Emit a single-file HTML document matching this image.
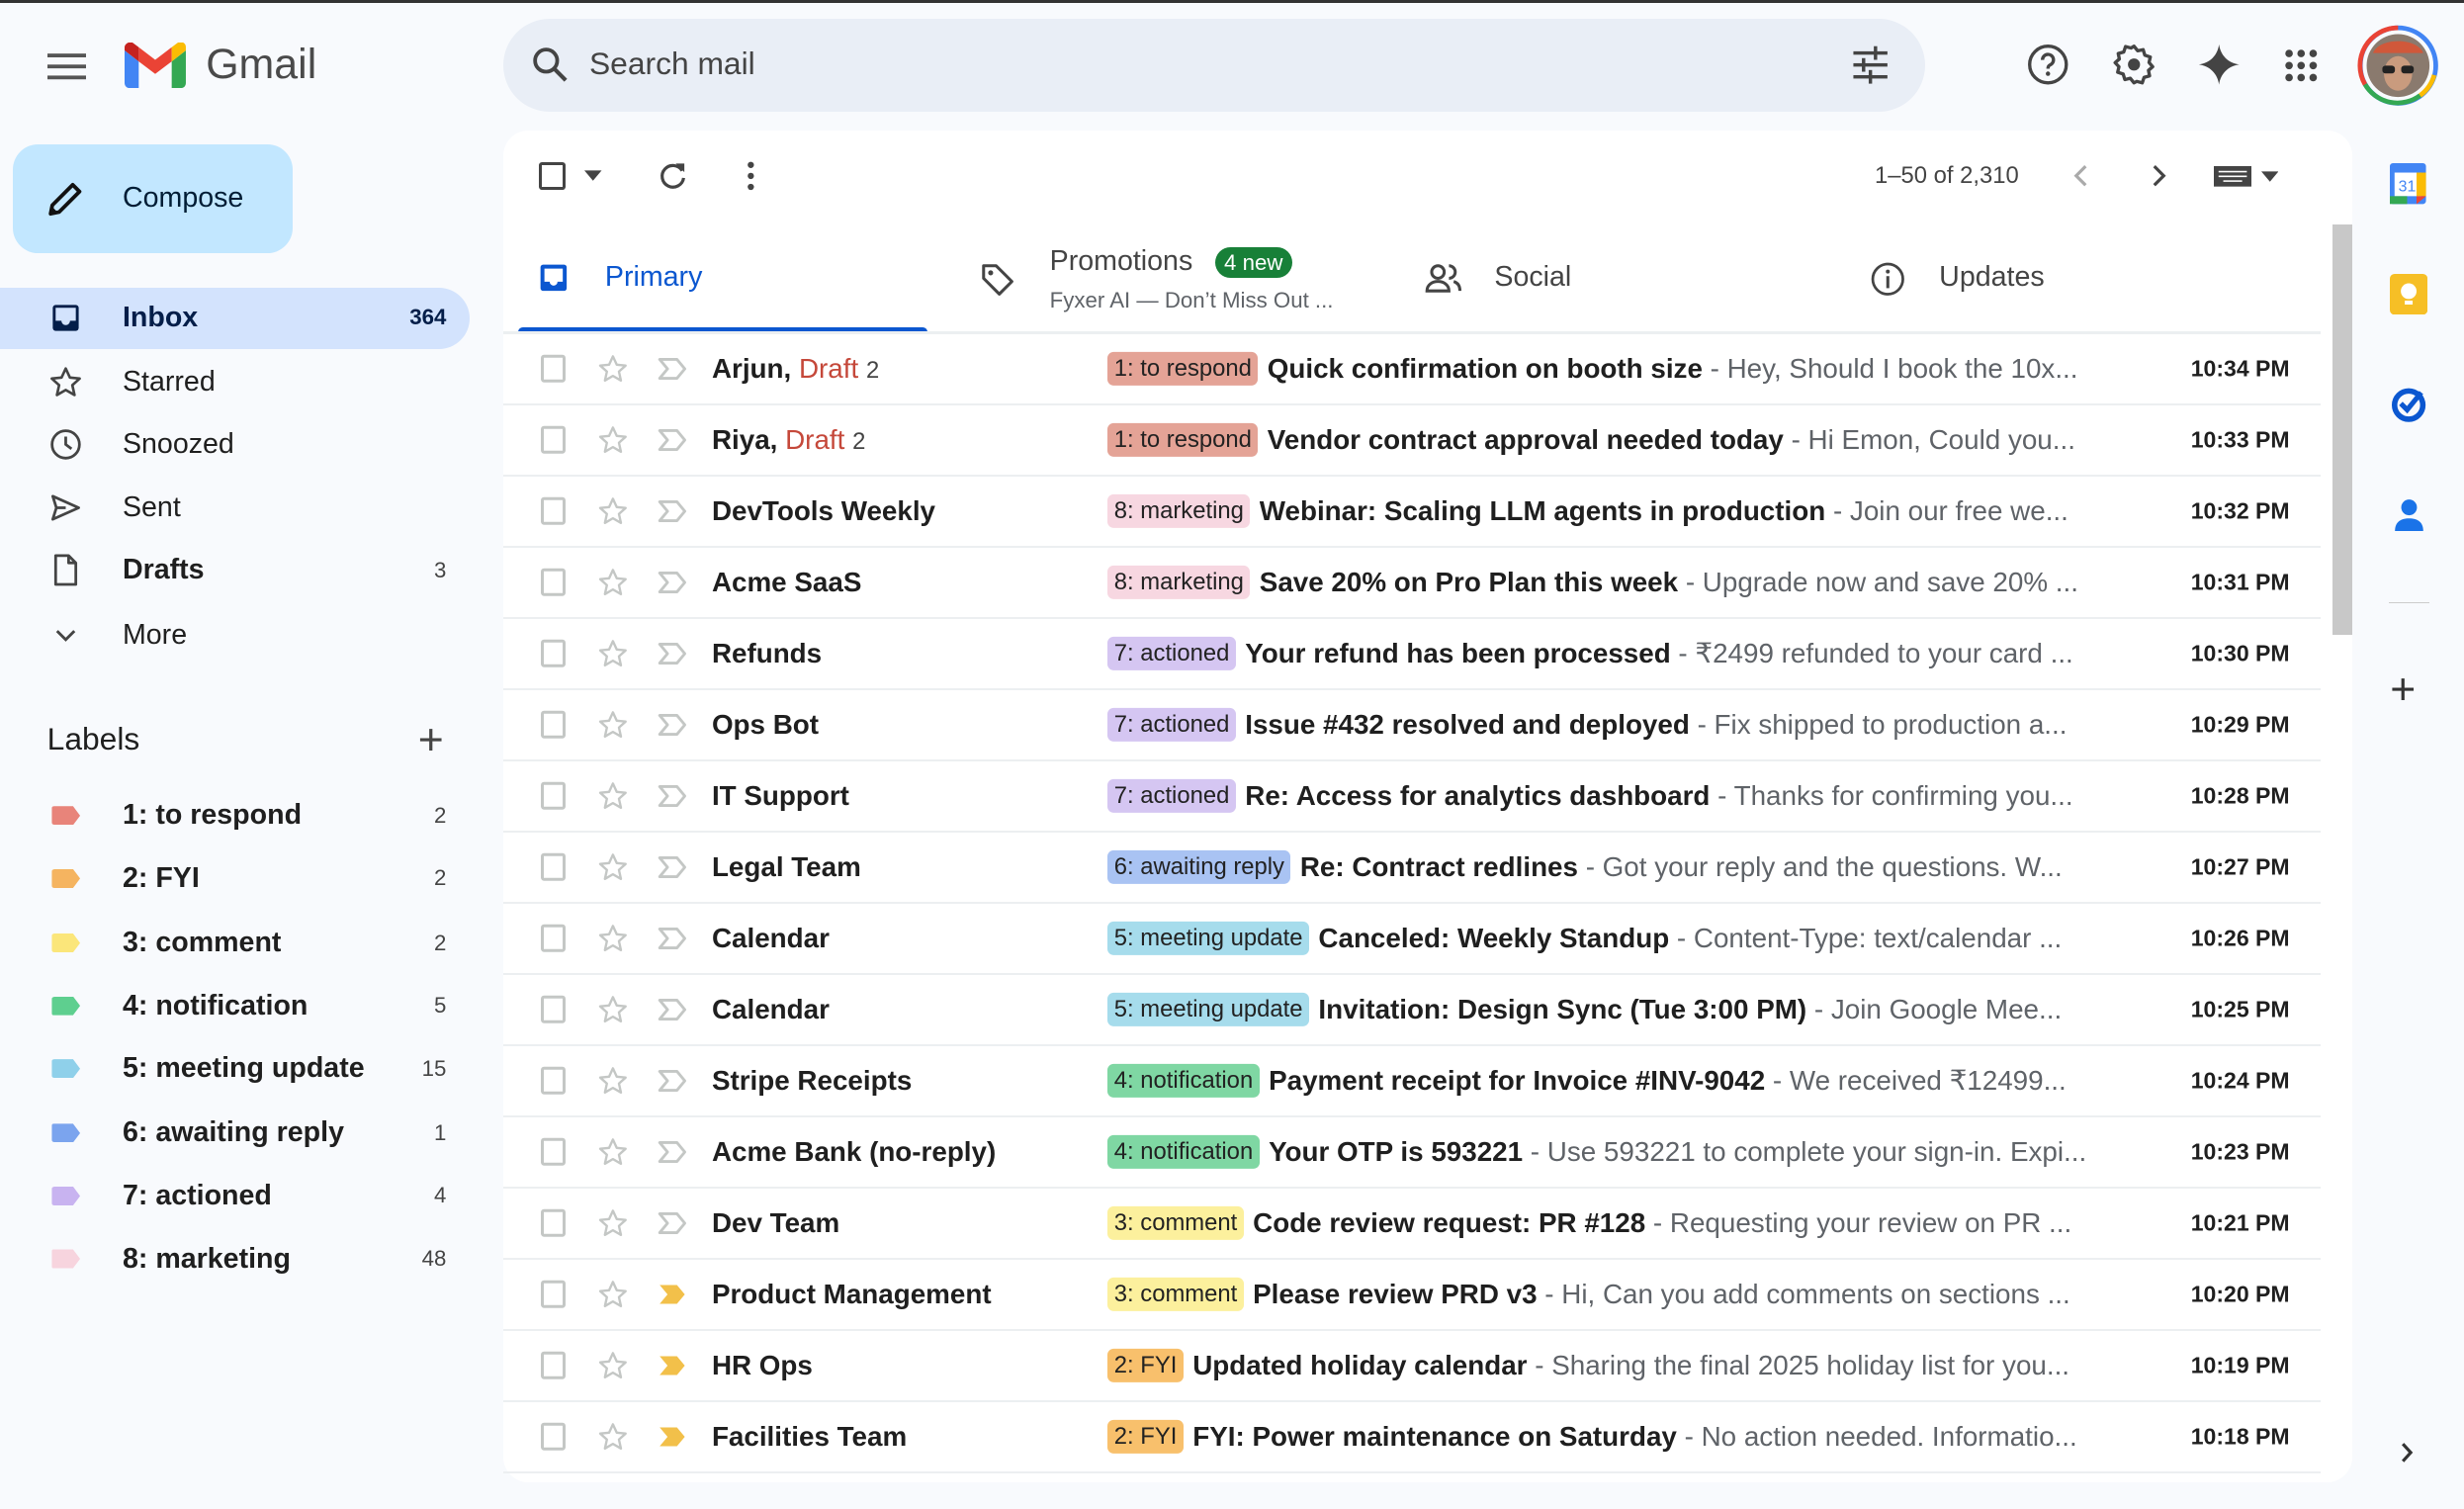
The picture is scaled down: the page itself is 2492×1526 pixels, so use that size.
<!DOCTYPE html>
<html><head><meta charset="utf-8"><style>
*{box-sizing:border-box;margin:0;padding:0}
html,body{width:2492px;height:1526px;overflow:hidden;background:#f8fafd}
#z{zoom:1.589286;width:1568px;height:960px;position:relative;font-family:"Liberation Sans",sans-serif;color:#1f1f1f;background:#f8fafd;overflow:hidden}
.topline{position:absolute;left:0;top:0;width:1568px;height:2px;background:#333}
.abs{position:absolute}
svg{display:block}
.nav{position:absolute;left:0;width:299px;height:40px;display:flex;align-items:center;font-size:18px}
.nav .ic{position:absolute;left:31px;top:9px}
.nav .t{position:absolute;left:78px}
.nav .c{position:absolute;right:15px;font-size:14px;color:#444}
.lab{position:absolute;left:0;width:299px;height:40px;display:flex;align-items:center;font-size:18px;font-weight:bold}
.lab .tg{position:absolute;left:33px;width:18px;height:12px;border-radius:2px 0 0 2px;clip-path:polygon(0 0,75% 0,100% 50%,75% 100%,0 100%)}
.lab .t{position:absolute;left:78px}
.lab .c{position:absolute;right:15px;font-size:14px;color:#444;font-weight:normal}
.main{position:absolute;left:320px;top:83px;width:1177px;height:860px;background:#fff;border-radius:16px}
.row{position:absolute;left:320px;width:1157px;height:45.3px;border-bottom:1.5px solid #eceff1;font-size:17.5px}
.row>*{position:absolute;top:50%;transform:translateY(-50%)}
.cb{left:24px;width:16px;height:18px;border:2px solid #c4c7c5;border-radius:2px}
.snd{left:133px;font-weight:bold;white-space:nowrap}
.snd .d{color:#c5483a;font-weight:normal}
.snd .n{color:#444;font-weight:normal;font-size:15px}
.tag{font-size:15px;padding:2px 4px;border-radius:4px;white-space:nowrap;color:#222}
.msg{white-space:nowrap;overflow:hidden;text-overflow:ellipsis;color:#5f6368}
.msg b{color:#1f1f1f}
.tm{right:20px;font-weight:bold;font-size:14.5px}
</style></head><body><div id="z">
<div class="topline"></div>
<!-- header -->
<svg class="abs" style="left:30px;top:32px" width="25" height="20" viewBox="0 0 25 20"><rect y="2" width="25" height="2.4" fill="#555"/><rect y="9" width="25" height="2.4" fill="#555"/><rect y="16" width="25" height="2.4" fill="#555"/></svg>
<svg class="abs" style="left:79px;top:27px" width="39" height="29" viewBox="0 0 39 29">
<path d="M0 5v21a3 3 0 0 0 3 3h6V12z" fill="#4285f4"/><path d="M30 12v17h6a3 3 0 0 0 3-3V5z" fill="#34a853"/>
<path d="M9 12 19.5 20 30 12V3l-10.5 8L9 3z" fill="#ea4335"/><path d="M0 5l9 7V3L5 0C3 -1 0 1 0 3z" fill="#c5221f"/><path d="M30 3v9l9-7V3c0-3-3-4-5-3z" fill="#fbbc04"/></svg>
<div class="abs" style="left:131px;top:26px;font-size:27px;color:#4a4a4a">Gmail</div>
<div class="abs" style="left:320px;top:12px;width:905px;height:59px;border-radius:30px;background:#e9eef6"></div>
<svg class="abs" style="left:337px;top:28px" width="26" height="26" viewBox="0 0 24 24"><circle cx="9.5" cy="9.5" r="6.5" fill="none" stroke="#444" stroke-width="2.2"/><path d="M14.5 14.5 21 21" stroke="#444" stroke-width="2.4"/></svg>
<div class="abs" style="left:375px;top:29px;font-size:20px;color:#444">Search mail</div>
<svg class="abs" style="left:1177px;top:28px" width="26" height="26" viewBox="0 0 24 24" fill="#444"><rect x="2" y="4" width="20" height="2"/><rect x="14" y="1" width="2" height="8"/><rect x="2" y="11" width="20" height="2"/><rect x="7" y="8" width="2" height="8"/><rect x="2" y="18" width="20" height="2"/><rect x="11" y="15" width="2" height="8"/></svg>
<svg class="abs" style="left:1289px;top:27px" width="28" height="28" viewBox="0 0 24 24"><circle cx="12" cy="12" r="10" fill="none" stroke="#444" stroke-width="1.8"/><path d="M9 9.5a3 3 0 1 1 4 2.8c-.8.4-1 1-1 2" fill="none" stroke="#444" stroke-width="1.8"/><circle cx="12" cy="17" r="1.2" fill="#444"/></svg>
<svg class="abs" style="left:1344px;top:27px" width="28" height="28" viewBox="0 0 24 24"><path d="M12 2l2 2.5 3-.6.9 3 3 1-.7 3 2 2.3-2.3 2 .6 3-3 .8-1 3-3-.8L12 22l-2-2.5-3 .7-.9-3-3-1 .7-3L1.7 11 4 9l-.6-3 3-.8 1-3 3 .8z" fill="none" stroke="#444" stroke-width="1.8" stroke-linejoin="round"/><circle cx="12" cy="12" r="3.3" fill="#444"/></svg>
<svg class="abs" style="left:1398px;top:27px" width="28" height="28" viewBox="0 0 24 24"><path d="M12 1C12.8 7 17 11.2 23 12 17 12.8 12.8 17 12 23 11.2 17 7 12.8 1 12 7 11.2 11.2 7 12 1z" fill="#444"/></svg>
<svg class="abs" style="left:1453px;top:30px" width="23" height="23" viewBox="0 0 24 24" fill="#444"><circle cx="4" cy="4" r="2.5"/><circle cx="12" cy="4" r="2.5"/><circle cx="20" cy="4" r="2.5"/><circle cx="4" cy="12" r="2.5"/><circle cx="12" cy="12" r="2.5"/><circle cx="20" cy="12" r="2.5"/><circle cx="4" cy="20" r="2.5"/><circle cx="12" cy="20" r="2.5"/><circle cx="20" cy="20" r="2.5"/></svg>
<svg class="abs" style="left:1500px;top:16px" width="52" height="52" viewBox="0 0 52 52"><circle cx="26" cy="26" r="24" fill="none" stroke="#4285f4" stroke-width="3"/><path d="M26 2A24 24 0 0 0 5 38" fill="none" stroke="#ea4335" stroke-width="3"/><path d="M5 38A24 24 0 0 0 40 45" fill="none" stroke="#34a853" stroke-width="3"/><path d="M40 45A24 24 0 0 0 49 32" fill="none" stroke="#fbbc04" stroke-width="3"/><circle cx="26" cy="26" r="20" fill="#8a7a6e"/><path d="M10 18c4-10 28-10 32 0z" fill="#d0583a"/><ellipse cx="26" cy="31" rx="9" ry="11" fill="#c99b7e"/><rect x="16" y="26" width="8" height="5" rx="2" fill="#222"/><rect x="28" y="26" width="8" height="5" rx="2" fill="#222"/></svg>
<!-- sidebar -->
<div class="abs" style="left:8px;top:92px;width:178px;height:69px;border-radius:16px;background:#c2e7ff"></div>
<svg class="abs" style="left:29px;top:113px" width="26" height="26" viewBox="0 0 24 24"><path d="M3 21l1-5L16 4l4 4L8 20z" fill="none" stroke="#111" stroke-width="2.2" stroke-linejoin="round"/><path d="M3 21l1-4 3 3z" fill="#111"/></svg>
<div class="abs" style="left:78px;top:116px;font-size:18px;color:#001d35">Compose</div>
<div class="abs" style="left:0;top:183px;width:299px;height:39px;background:#d3e3fd;border-radius:0 20px 20px 0"></div>
<div class="nav" style="top:182px;font-weight:bold;color:#041e49"><svg class="ic" width="22" height="22" viewBox="0 0 24 24"><rect x="3" y="3" width="18" height="18" rx="2" fill="#041e49"/><path d="M5 5h14v9h-4a3 3 0 0 1-6 0H5z" fill="#d3e3fd"/></svg><span class="t">Inbox</span><span class="c" style="color:#041e49;font-weight:bold">364</span></div>
<div class="nav" style="top:223px"><svg class="ic" width="22" height="22" viewBox="0 0 24 24"><path d="M12 2.5l2.9 6.3 6.8.7-5.1 4.6 1.5 6.8L12 17.4 5.9 20.9l1.5-6.8L2.3 9.5l6.8-.7z" fill="none" stroke="#444" stroke-width="1.8" stroke-linejoin="round"/></svg><span class="t">Starred</span></div>
<div class="nav" style="top:263px"><svg class="ic" width="22" height="22" viewBox="0 0 24 24"><circle cx="12" cy="12" r="9.5" fill="none" stroke="#444" stroke-width="1.9"/><path d="M12 6.5V12l4 3" fill="none" stroke="#444" stroke-width="1.9"/></svg><span class="t">Snoozed</span></div>
<div class="nav" style="top:303px"><svg class="ic" width="22" height="22" viewBox="0 0 24 24"><path d="M3 4l18 8-18 8 2.5-8z M5.5 12H12" fill="none" stroke="#444" stroke-width="1.9" stroke-linejoin="round"/></svg><span class="t">Sent</span></div>
<div class="nav" style="top:343px;font-weight:bold"><svg class="ic" width="22" height="22" viewBox="0 0 24 24"><path d="M5 2h9l5 5v15H5z M14 2v5h5" fill="none" stroke="#444" stroke-width="1.9" stroke-linejoin="round"/></svg><span class="t">Drafts</span><span class="c" style="font-weight:normal">3</span></div>
<div class="nav" style="top:384px"><svg class="ic" width="22" height="22" viewBox="0 0 24 24"><path d="M6 9l6 6 6-6" fill="none" stroke="#444" stroke-width="2"/></svg><span class="t">More</span></div>
<div class="abs" style="left:30px;top:459px;font-size:20px;color:#1f1f1f">Labels</div>
<div class="abs" style="left:266px;top:456px;font-size:28px;color:#444;line-height:30px">+</div>
<div class="lab" style="top:499px"><span class="tg" style="background:#e8847a"></span><span class="t">1: to respond</span><span class="c">2</span></div>
<div class="lab" style="top:539px"><span class="tg" style="background:#f5b460"></span><span class="t">2: FYI</span><span class="c">2</span></div>
<div class="lab" style="top:580px"><span class="tg" style="background:#fbe67a"></span><span class="t">3: comment</span><span class="c">2</span></div>
<div class="lab" style="top:620px"><span class="tg" style="background:#5ecf8f"></span><span class="t">4: notification</span><span class="c">5</span></div>
<div class="lab" style="top:660px"><span class="tg" style="background:#8fd0ea"></span><span class="t">5: meeting update</span><span class="c">15</span></div>
<div class="lab" style="top:701px"><span class="tg" style="background:#7ba4ee"></span><span class="t">6: awaiting reply</span><span class="c">1</span></div>
<div class="lab" style="top:741px"><span class="tg" style="background:#c8b3f0"></span><span class="t">7: actioned</span><span class="c">4</span></div>
<div class="lab" style="top:781px"><span class="tg" style="background:#f7d4de"></span><span class="t">8: marketing</span><span class="c">48</span></div>
<!-- main -->
<div class="main"></div>
<div class="abs" style="left:343px;top:103px;width:17px;height:18px;border:2px solid #444;border-radius:2px"></div>
<svg class="abs" style="left:372px;top:108px" width="11" height="7" viewBox="0 0 10 6"><path d="M0 0h10L5 6z" fill="#444"/></svg>
<svg class="abs" style="left:417px;top:101px" width="22" height="22" viewBox="0 0 24 24"><path d="M18.5 8A7.5 7.5 0 1 0 19.5 13" fill="none" stroke="#444" stroke-width="2.2"/><path d="M14 3h6v6z" fill="#444"/></svg>
<svg class="abs" style="left:474px;top:102px" width="8" height="20" viewBox="0 0 8 20" fill="#444"><circle cx="4" cy="3" r="2"/><circle cx="4" cy="10" r="2"/><circle cx="4" cy="17" r="2"/></svg>
<div class="abs" style="left:1193px;top:103px;font-size:15px;color:#444">1–50 of 2,310</div>
<svg class="abs" style="left:1318px;top:104px" width="12" height="16" viewBox="0 0 12 16"><path d="M9 2 3 8l6 6" fill="none" stroke="#aaa" stroke-width="2"/></svg>
<svg class="abs" style="left:1368px;top:104px" width="12" height="16" viewBox="0 0 12 16"><path d="M3 2l6 6-6 6" fill="none" stroke="#444" stroke-width="2"/></svg>
<svg class="abs" style="left:1409px;top:106px" width="24" height="13" viewBox="0 0 24 13"><rect width="24" height="13" fill="#444"/><g fill="#fff"><rect x="3" y="3" width="18" height="1"/><rect x="3" y="6" width="18" height="1"/><rect x="6" y="9" width="12" height="1"/></g></svg>
<svg class="abs" style="left:1439px;top:109px" width="11" height="7" viewBox="0 0 10 6"><path d="M0 0h10L5 6z" fill="#444"/></svg>
<!-- tabs -->
<svg class="abs" style="left:342px;top:167px" width="20" height="20" viewBox="0 0 24 24"><rect x="2" y="2" width="20" height="20" rx="2" fill="#0b57d0"/><path d="M5 5h14v10h-4a3 3 0 0 1-6 0H5z" fill="#fff"/></svg>
<div class="abs" style="left:385px;top:166px;font-size:18px;color:#0b57d0">Primary</div>
<div class="abs" style="left:330px;top:208px;width:260px;height:4px;background:#0b57d0;border-radius:3px 3px 0 0"></div>
<div class="abs" style="left:320px;top:211px;width:1157px;height:1.5px;background:#eceff1"></div>
<svg class="abs" style="left:623px;top:166px" width="24" height="24" viewBox="0 0 24 24"><path d="M3 3h8l10 10-8 8L3 11z" fill="none" stroke="#444" stroke-width="1.9" stroke-linejoin="round"/><circle cx="7.5" cy="7.5" r="1.6" fill="#444"/></svg>
<div class="abs" style="left:668px;top:156px;font-size:18px;color:#444">Promotions</div>
<div class="abs" style="left:773px;top:157px;height:20px;padding:0 6px;border-radius:10px;background:#188038;color:#fff;font-size:14px;line-height:20px">4 new</div>
<div class="abs" style="left:668px;top:183px;font-size:14px;color:#5f6368">Fyxer AI — Don’t Miss Out ...</div>
<svg class="abs" style="left:906px;top:166px" width="26" height="22" viewBox="0 0 26 22"><circle cx="9" cy="7" r="4" fill="none" stroke="#444" stroke-width="1.9"/><path d="M2 19c0-4 3.5-6 7-6s7 2 7 6z" fill="none" stroke="#444" stroke-width="1.9"/><path d="M16 3a4 4 0 0 1 0 8M19 13c2.5.7 4 2.5 4 6" fill="none" stroke="#444" stroke-width="1.9"/></svg>
<div class="abs" style="left:951px;top:166px;font-size:18px;color:#444">Social</div>
<svg class="abs" style="left:1190px;top:166px" width="23" height="23" viewBox="0 0 24 24"><circle cx="12" cy="12" r="10" fill="none" stroke="#444" stroke-width="1.8"/><rect x="11" y="10" width="2" height="8" fill="#444"/><circle cx="12" cy="7" r="1.3" fill="#444"/></svg>
<div class="abs" style="left:1234px;top:166px;font-size:18px;color:#444">Updates</div>
<div class="abs" style="left:1484px;top:143px;width:13px;height:261px;background:#c8c8c8"></div>
<div id="rows"></div>
<!-- right panel -->
<svg class="abs" style="left:1521px;top:104px" width="23" height="26" viewBox="0 0 23 26"><rect width="23" height="26" rx="2" fill="#4285f4"/><rect x="3" y="6" width="17" height="15" fill="#fff"/><rect x="0" y="21" width="11" height="5" fill="#34a853"/><rect x="17" y="6" width="6" height="15" fill="#fbbc04"/><path d="M17 21h6l-6 5z" fill="#ea4335"/><text x="11" y="18" font-size="10" text-anchor="middle" fill="#4285f4" font-family="Liberation Sans">31</text></svg>
<svg class="abs" style="left:1521px;top:174px" width="24" height="26" viewBox="0 0 24 26"><rect width="24" height="26" rx="3" fill="#f6bf26"/><circle cx="12" cy="11" r="5" fill="#fff"/><rect x="9.5" y="17" width="5" height="2.5" fill="#fff"/></svg>
<svg class="abs" style="left:1521px;top:245px" width="24" height="24" viewBox="0 0 24 24"><circle cx="12" cy="13" r="9" fill="none" stroke="#0b57d0" stroke-width="3.5"/><path d="M7 12l4 4 9-11" fill="none" stroke="#0b57d0" stroke-width="3.2"/></svg>
<svg class="abs" style="left:1522px;top:316px" width="22" height="24" viewBox="0 0 22 24"><circle cx="11" cy="7" r="5" fill="#1a73e8"/><path d="M2 22c0-6 4-8 9-8s9 2 9 8z" fill="#1a73e8"/></svg>
<div class="abs" style="left:1520px;top:383px;width:26px;height:1px;background:#ccc"></div>
<div class="abs" style="left:1521px;top:424px;font-size:28px;color:#333;line-height:30px">+</div>
<svg class="abs" style="left:1527px;top:917px" width="10" height="15" viewBox="0 0 10 15"><path d="M2 2l5 5.5L2 13" fill="none" stroke="#333" stroke-width="2"/></svg>
<script>
var data=[
["Arjun, <span class='d'>Draft</span> <span class='n'>2</span>","1: to respond","#e4a396","Quick confirmation on booth size","Hey, Should I book the 10x...","10:34 PM",0],
["Riya, <span class='d'>Draft</span> <span class='n'>2</span>","1: to respond","#e4a396","Vendor contract approval needed today","Hi Emon, Could you...","10:33 PM",0],
["DevTools Weekly","8: marketing","#f7d7e1","Webinar: Scaling LLM agents in production","Join our free we...","10:32 PM",0],
["Acme SaaS","8: marketing","#f7d7e1","Save 20% on Pro Plan this week","Upgrade now and save 20% ...","10:31 PM",0],
["Refunds","7: actioned","#d5c6f2","Your refund has been processed","₹2499 refunded to your card ...","10:30 PM",0],
["Ops Bot","7: actioned","#d5c6f2","Issue #432 resolved and deployed","Fix shipped to production a...","10:29 PM",0],
["IT Support","7: actioned","#d5c6f2","Re: Access for analytics dashboard","Thanks for confirming you...","10:28 PM",0],
["Legal Team","6: awaiting reply","#a9c3f3","Re: Contract redlines","Got your reply and the questions. W...","10:27 PM",0],
["Calendar","5: meeting update","#a6dcec","Canceled: Weekly Standup","Content-Type: text/calendar ...","10:26 PM",0],
["Calendar","5: meeting update","#a6dcec","Invitation: Design Sync (Tue 3:00 PM)","Join Google Mee...","10:25 PM",0],
["Stripe Receipts","4: notification","#7fd7a3","Payment receipt for Invoice #INV-9042","We received ₹12499...","10:24 PM",0],
["Acme Bank (no-reply)","4: notification","#7fd7a3","Your OTP is 593221","Use 593221 to complete your sign-in. Expi...","10:23 PM",0],
["Dev Team","3: comment","#fcf09d","Code review request: PR #128","Requesting your review on PR ...","10:21 PM",0],
["Product Management","3: comment","#fcf09d","Please review PRD v3","Hi, Can you add comments on sections ...","10:20 PM",1],
["HR Ops","2: FYI","#f8c06c","Updated holiday calendar","Sharing the final 2025 holiday list for you...","10:19 PM",1],
["Facilities Team","2: FYI","#f8c06c","FYI: Power maintenance on Saturday","No action needed. Informatio...","10:18 PM",1]];
var h="";
data.forEach(function(r,i){
var top=212.5+i*45.3;
var imp=r[6]?'<path d="M2 3h11l5 6-5 6H2l5-6z" fill="#f2c04a"/>':'<path d="M2 3h11l5 6-5 6H2l5-6z" fill="none" stroke="#c4c7c5" stroke-width="1.8" stroke-linejoin="round"/>';
h+='<div class="row" style="top:'+top+'px"><div class="cb"></div>'+
'<svg style="left:60px" width="20" height="20" viewBox="0 0 24 24"><path d="M12 2.5l2.9 6.3 6.8.7-5.1 4.6 1.5 6.8L12 17.4 5.9 20.9l1.5-6.8L2.3 9.5l6.8-.7z" fill="none" stroke="#c4c7c5" stroke-width="1.8" stroke-linejoin="round"/></svg>'+
'<svg style="left:98px" width="20" height="18" viewBox="0 0 20 18">'+imp+'</svg>'+
'<div class="snd">'+r[0]+'</div>'+
'<div style="left:385px;display:flex;align-items:center;width:633px"><span class="tag" style="background:'+r[2]+'">'+r[1]+'</span><span class="msg" style="margin-left:6px"><b>'+r[3]+'</b> - '+r[4]+'</span></div>'+
'<div class="tm">'+r[5]+'</div></div>';
});
document.getElementById("rows").innerHTML=h;
</script>
</div></body></html>
